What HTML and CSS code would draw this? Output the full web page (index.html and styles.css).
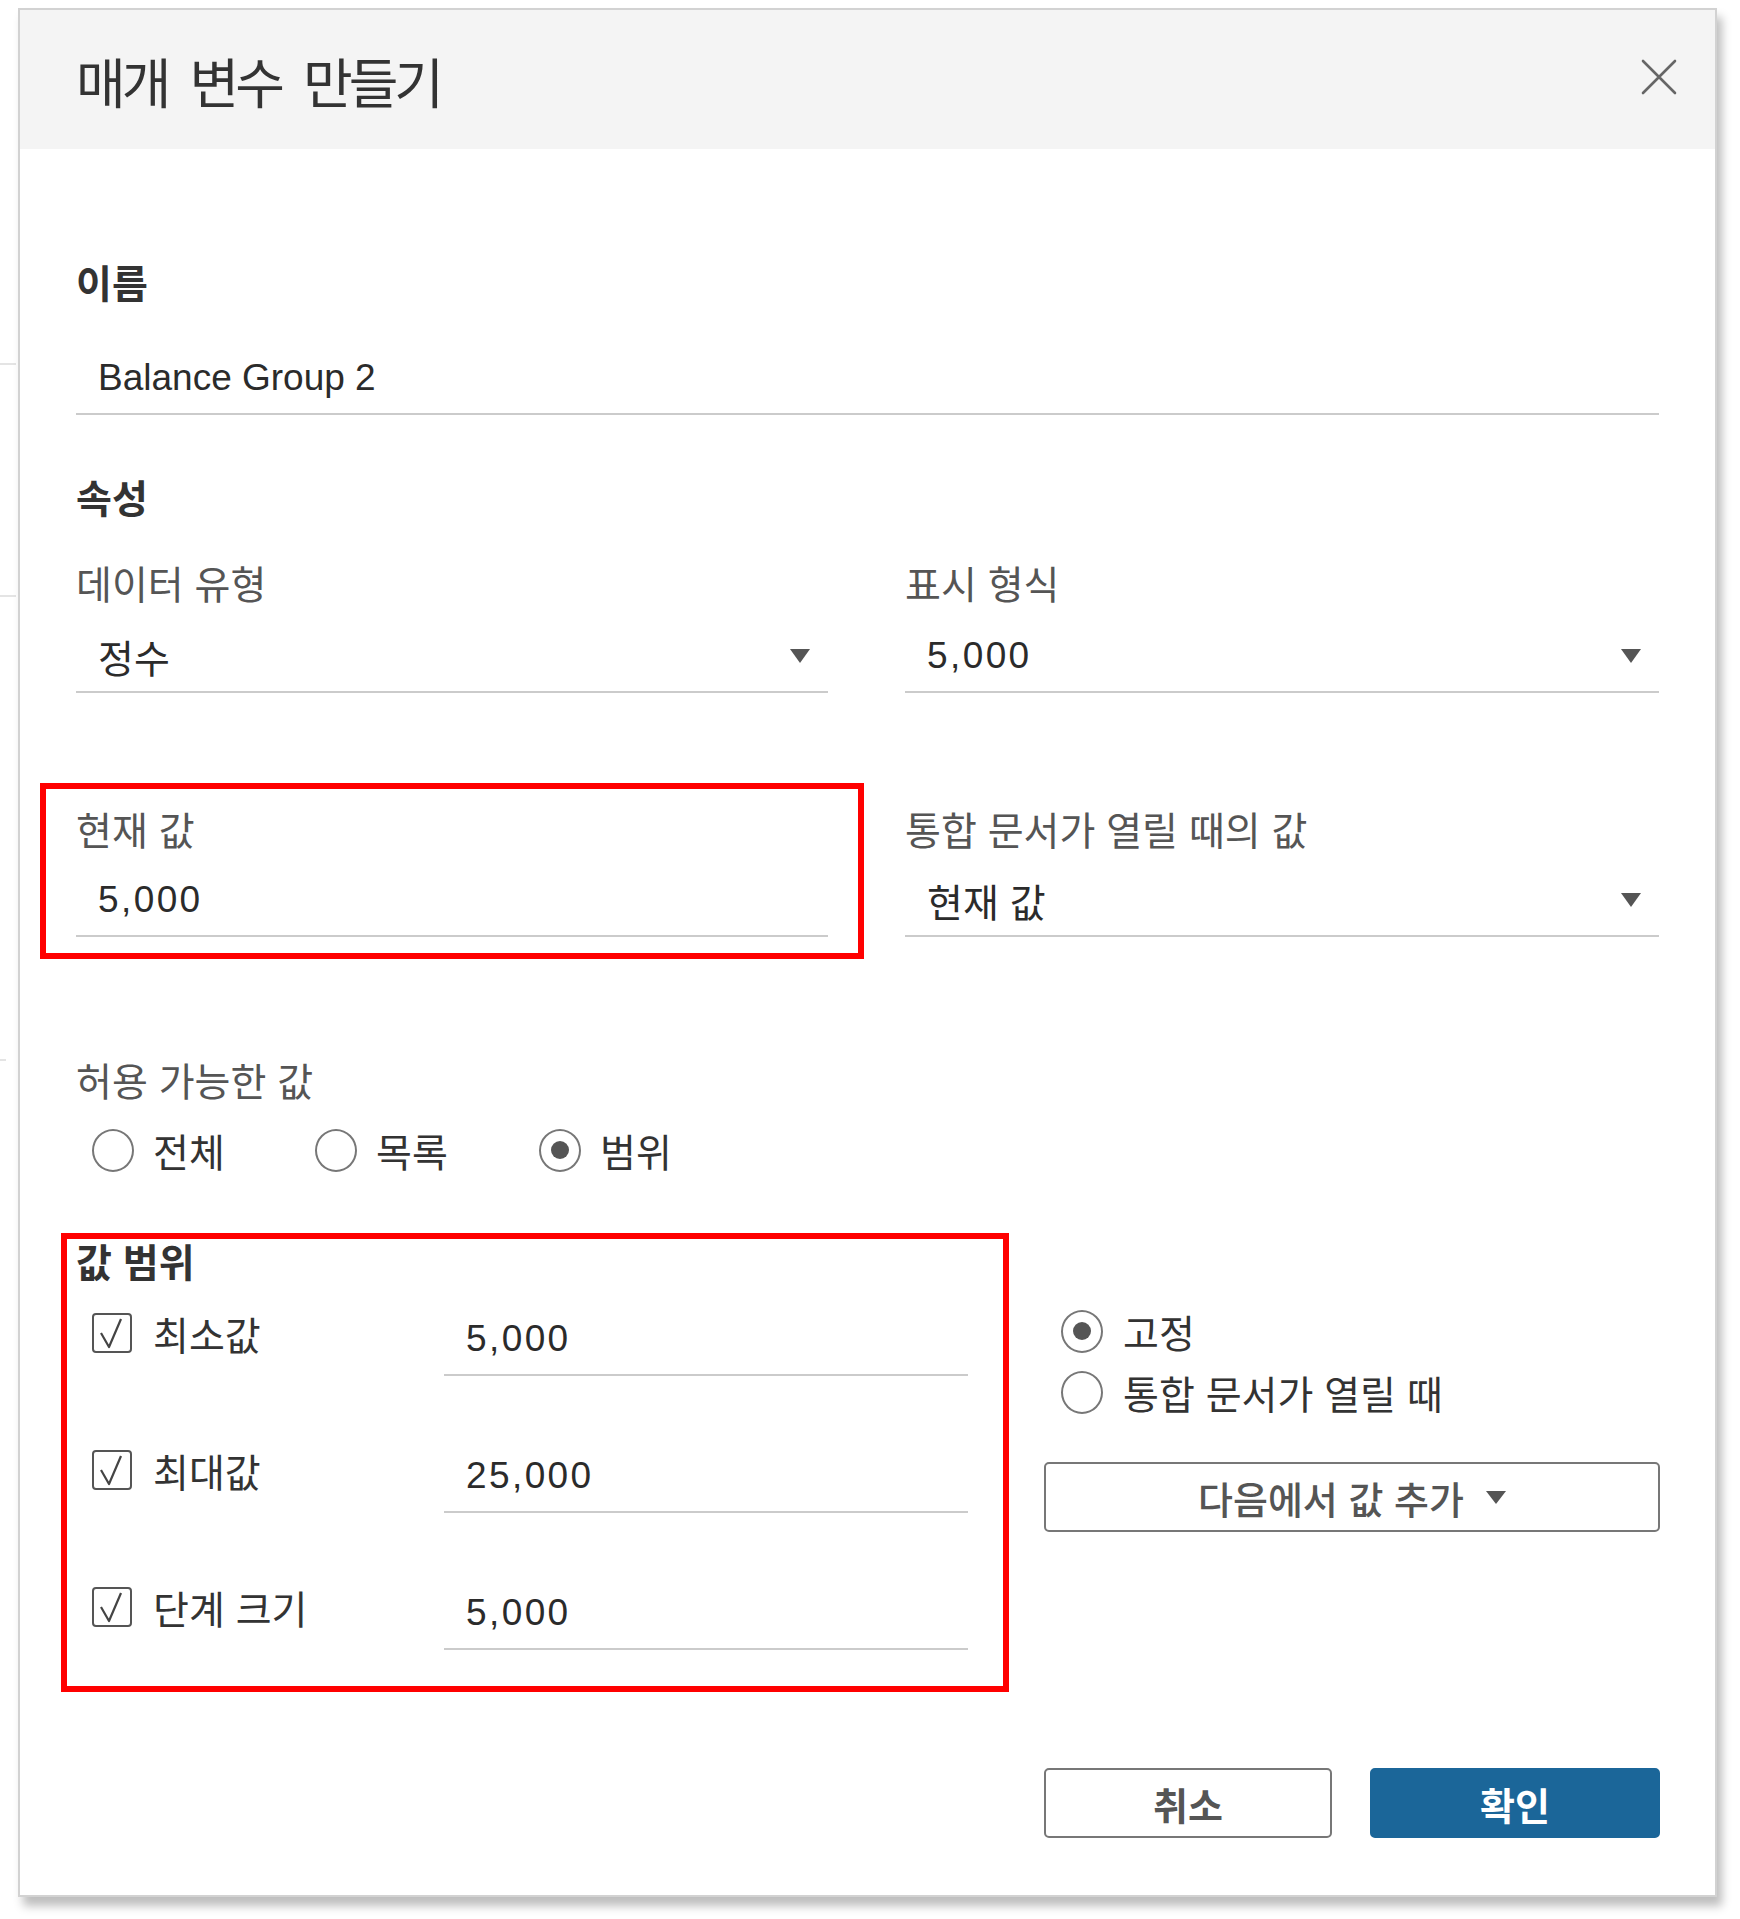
FILE: index.html
```html
<!DOCTYPE html>
<html lang="ko">
<head>
<meta charset="utf-8">
<title>매개 변수 만들기</title>
<link rel="stylesheet" href="styles.css">
</head>
<body>
<div class="backdrop">
  <span class="bd-line l1"></span>
  <span class="bd-line l2"></span>
  <span class="bd-line l3"></span>
</div>
<div class="dialog">
  <header class="dlg-head">
    <h1 class="dlg-title">매개 변수 만들기</h1>
    <button class="close" aria-label="닫기">
      <svg width="36" height="36" viewBox="0 0 36 36"><path d="M2 2 L34 34 M34 2 L2 34" stroke="#666" stroke-width="2.6" stroke-linecap="round" fill="none"/></svg>
    </button>
  </header>

  <div class="dlg-body">
    <div class="sec-label">이름</div>
    <div class="field name-field">Balance Group 2</div>

    <div class="sec-label props-label">속성</div>
    <div class="grid2 row-a">
      <div class="cell">
        <div class="label">데이터 유형</div>
        <div class="field select"><span class="ko">정수</span>
          <svg class="caret" width="20" height="15" viewBox="0 0 20 15"><polygon points="0,0 20,0 10,14" fill="#555"/></svg>
        </div>
      </div>
      <div class="cell">
        <div class="label">표시 형식</div>
        <div class="field select"><span class="num">5,000</span>
          <svg class="caret" width="20" height="15" viewBox="0 0 20 15"><polygon points="0,0 20,0 10,14" fill="#555"/></svg>
        </div>
      </div>
    </div>

    <div class="grid2 row-b">
      <div class="cell highlight hl-current">
        <div class="label">현재 값</div>
        <div class="field"><span class="num">5,000</span></div>
      </div>
      <div class="cell">
        <div class="label">통합 문서가 열릴 때의 값</div>
        <div class="field select"><span class="ko">현재 값</span>
          <svg class="caret" width="20" height="15" viewBox="0 0 20 15"><polygon points="0,0 20,0 10,14" fill="#555"/></svg>
        </div>
      </div>
    </div>

    <div class="label allowed-label">허용 가능한 값</div>
    <div class="radio-row">
      <div class="radio-item"><span class="radio"></span><span class="opt">전체</span></div>
      <div class="radio-item"><span class="radio"></span><span class="opt">목록</span></div>
      <div class="radio-item"><span class="radio on"></span><span class="opt">범위</span></div>
    </div>

    <div class="range">
      <div class="range-left highlight hl-range">
        <div class="sec-label range-label">값 범위</div>
        <div class="range-rows">
          <div class="range-row">
            <div class="chk-wrap">
              <span class="chk"><svg width="36" height="36" viewBox="0 0 36 36"><path d="M7 18 L15 32 L27 4" stroke="#444" stroke-width="2.2" fill="none" stroke-linejoin="round"/></svg></span>
              <span class="chk-label">최소값</span>
            </div>
            <div class="field range-field"><span class="num">5,000</span></div>
          </div>
          <div class="range-row">
            <div class="chk-wrap">
              <span class="chk"><svg width="36" height="36" viewBox="0 0 36 36"><path d="M7 18 L15 32 L27 4" stroke="#444" stroke-width="2.2" fill="none" stroke-linejoin="round"/></svg></span>
              <span class="chk-label">최대값</span>
            </div>
            <div class="field range-field"><span class="num">25,000</span></div>
          </div>
          <div class="range-row">
            <div class="chk-wrap">
              <span class="chk"><svg width="36" height="36" viewBox="0 0 36 36"><path d="M7 18 L15 32 L27 4" stroke="#444" stroke-width="2.2" fill="none" stroke-linejoin="round"/></svg></span>
              <span class="chk-label">단계 크기</span>
            </div>
            <div class="field range-field"><span class="num">5,000</span></div>
          </div>
        </div>
      </div>
      <div class="range-right">
        <div class="radio-item stack"><span class="radio on"></span><span class="opt">고정</span></div>
        <div class="radio-item stack"><span class="radio"></span><span class="opt">통합 문서가 열릴 때</span></div>
        <button class="btn btn-outline add-btn">다음에서 값 추가
          <svg width="20" height="14" viewBox="0 0 20 14"><polygon points="0,0 20,0 10,13" fill="#555"/></svg>
        </button>
      </div>
    </div>

    <div class="footer">
      <button class="btn btn-outline cancel">취소</button>
      <button class="btn btn-primary ok">확인</button>
    </div>
  </div>
</div>
</body>
</html>
```
FILE: styles.css
```css
* { box-sizing: border-box; margin: 0; padding: 0; }
html, body { background: #fff; }
body {
  width: 1740px;
  height: 1919px;
  position: relative;
  overflow: hidden;
  font-family: "Liberation Sans", "Noto Sans CJK KR", sans-serif;
  color: #333;
}

/* faint page behind the dialog */
.backdrop { position: absolute; left: 0; top: 0; width: 18px; height: 1919px; }
.bd-line { position: absolute; left: 0; width: 16px; height: 2px; background: #e4e4e4; }
.bd-line.l1 { top: 363px; }
.bd-line.l2 { top: 595px; }
.bd-line.l3 { top: 1059px; width: 6px; }

.dialog {
  position: relative;
  margin: 8px 0 0 18px;
  width: 1699px;
  height: 1889px;
  border: 2px solid #d2d2d2;
  background: #fff;
  box-shadow: 5px 9px 9px rgba(0, 0, 0, 0.26);
  display: flex;
  flex-direction: column;
}

.dlg-head {
  height: 139px;
  background: #f4f4f4;
  display: flex;
  justify-content: space-between;
  align-items: flex-start;
  padding: 0 38px 0 56px;
}
.dlg-title {
  margin-top: 41px;
  font-family: "Noto Sans CJK KR", sans-serif;
  font-size: 54px;
  line-height: 60px;
  font-weight: 400;
  color: #333;
  letter-spacing: -4px;
  word-spacing: 11px;
}
.close {
  margin-top: 49px;
  width: 36px;
  height: 36px;
  border: 0;
  background: transparent;
  display: block;
}
.close svg { display: block; }

.dlg-body { padding: 108px 56px 0; }

.sec-label {
  font-family: "Noto Sans CJK KR", sans-serif;
  font-size: 39px;
  line-height: 48px;
  font-weight: 700;
  color: #333;
}
.label {
  font-family: "Noto Sans CJK KR", sans-serif;
  font-size: 39px;
  line-height: 48px;
  font-weight: 400;
  color: #555;
}

.field {
  font-size: 37px;
  line-height: 50px;
  color: #2b2b2b;
  padding: 0 0 10px 22px;
  border-bottom: 2px solid #cbcbcb;
}
.field .ko {
  font-family: "Noto Sans CJK KR", sans-serif;
  font-size: 39px;
}
.num { letter-spacing: 2.4px; }
.name-field { margin-top: 48px; }
.props-label { margin-top: 57px; }

.select {
  display: flex;
  align-items: center;
  justify-content: space-between;
  padding-right: 18px;
}
.caret { display: block; }

.grid2 {
  display: grid;
  grid-template-columns: 752px 754px;
  column-gap: 77px;
}
.row-a { margin-top: 38px; }
.row-a .field { margin-top: 25px; }
.row-b { margin-top: 111px; }
.row-b .field { margin-top: 23px; }

.cell { position: relative; }

/* red annotation rectangles drawn over the form */
.highlight::after {
  content: "";
  position: absolute;
  border: 6px solid #ff0000;
  pointer-events: none;
}
.hl-current::after { left: -36px; top: -21px; right: -36px; bottom: -22px; }

.allowed-label { margin-top: 118px; }

.radio-row {
  margin-top: 22px;
  display: grid;
  grid-template-columns: 223px 224px 223px;
  padding-left: 16px;
}
.radio-item {
  display: flex;
  align-items: center;
  gap: 19px;
  height: 50px;
}
.radio {
  width: 42px;
  height: 43px;
  border-radius: 50%;
  border: 2px solid #777;
  background: #fff;
  display: flex;
  align-items: center;
  justify-content: center;
  flex: none;
}
.radio.on::before {
  content: "";
  width: 18px;
  height: 18px;
  border-radius: 50%;
  background: #555;
}
.opt {
  font-family: "Noto Sans CJK KR", sans-serif;
  font-size: 39px;
  line-height: 48px;
  color: #333;
}

.range {
  margin-top: 61px;
  display: flex;
}
.range-left {
  position: relative;
  width: 892px;
  flex: none;
}
.hl-range::after { left: -15px; top: -3px; right: -41px; bottom: -42px; }

.range-rows {
  margin-top: 29px;
  display: flex;
  flex-direction: column;
  gap: 74px;
}
.range-row {
  display: flex;
  align-items: flex-start;
}
.chk-wrap {
  width: 368px;
  flex: none;
  display: flex;
  align-items: center;
  gap: 21px;
  padding-left: 16px;
  height: 40px;
}
.chk {
  width: 40px;
  height: 40px;
  border: 2px solid #555;
  border-radius: 4px;
  display: flex;
  align-items: center;
  justify-content: center;
  flex: none;
}
.chk svg { display: block; }
.chk-label {
  font-family: "Noto Sans CJK KR", sans-serif;
  font-size: 39px;
  line-height: 40px;
  color: #333;
}
.range-field {
  width: 524px;
  margin-top: 1px;
}

.range-right {
  flex: 1;
  margin-left: 76px;
  padding-top: 70px;
  display: flex;
  flex-direction: column;
}
.radio-item.stack { padding-left: 17px; gap: 20px; }
.radio-item.stack + .radio-item.stack { margin-top: 11px; }

.btn {
  height: 70px;
  border-radius: 5px;
  font-family: "Noto Sans CJK KR", sans-serif;
  font-size: 38px;
  font-weight: 700;
  display: flex;
  align-items: center;
  justify-content: center;
}
.btn-outline {
  background: #fff;
  border: 2px solid #777;
  color: #555;
}
.btn-primary {
  background: #1b6699;
  border: 2px solid #1b6699;
  color: #fff;
}
.add-btn {
  margin-top: 45px;
  width: 616px;
  gap: 22px;
  font-weight: 500;
}
.add-btn svg { display: block; margin-top: 2px; }

.footer {
  margin-top: 118px;
  display: flex;
  justify-content: flex-end;
  gap: 38px;
  margin-right: -1px;
}
.cancel { width: 288px; }
.ok { width: 290px; }
```
